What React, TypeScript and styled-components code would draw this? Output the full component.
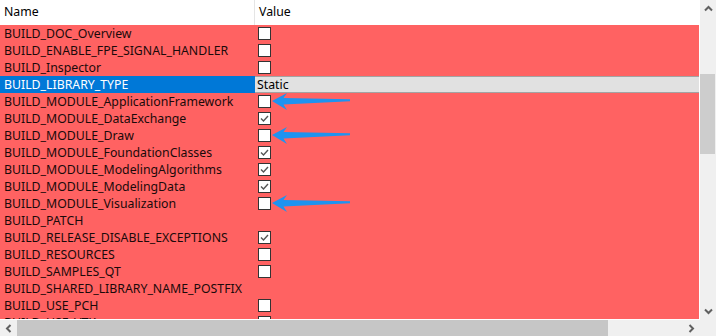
import React from "react";
import styled, { createGlobalStyle } from "styled-components";

const Global = createGlobalStyle`
  html, body { margin: 0; padding: 0; background: #ffffff; }
  body { font-family: "Noto Sans", "Segoe UI", sans-serif; font-size: 12.3px; }
  #root { width: 716px; height: 336px; overflow: hidden; }
`;

const Window = styled.div`
  width: 716px;
  height: 336px;
  display: grid;
  grid-template-columns: 700px 16px;
  grid-template-rows: 320px 16px;
  background: #f0f0f0;
`;

const ListView = styled.div`
  background: #ffffff;
  overflow: hidden;
  display: flex;
  flex-direction: column;
  padding-bottom: 1px;
  box-sizing: border-box;
`;

const Header = styled.div`
  display: flex;
  height: 25px;
  flex: none;
  color: #000;
`;

const HeadCell = styled.div<{ $w?: number }>`
  box-sizing: border-box;
  width: ${(p) => (p.$w ? `${p.$w}px` : "auto")};
  flex: ${(p) => (p.$w ? "none" : "1")};
  padding-left: 4px;
  line-height: 24px;
  border-right: ${(p) => (p.$w ? "1px solid #e5e5e5" : "none")};
`;

const Body = styled.div`
  flex: 1;
  overflow: hidden;
`;

const Row = styled.div`
  display: flex;
  width: 699px;
  height: 17px;
  background: #ff6262;
  color: #1a0a0a;
`;

const NameCell = styled.div<{ $sel?: boolean }>`
  box-sizing: border-box;
  width: 255px;
  flex: none;
  padding-left: 4px;
  line-height: 17px;
  white-space: nowrap;
  overflow: hidden;
  background: ${(p) => (p.$sel ? "#0078d7" : "transparent")};
  color: ${(p) => (p.$sel ? "#ffffff" : "inherit")};
`;

const ValueCell = styled.div<{ $edit?: boolean }>`
  box-sizing: border-box;
  flex: 1;
  position: relative;
  display: flex;
  align-items: center;
  padding-left: ${(p) => (p.$edit ? "2px" : "3px")};
  line-height: 15px;
  color: #000;
  background: ${(p) => (p.$edit ? "#e1e1e1" : "transparent")};
  border-top: ${(p) => (p.$edit ? "1px solid #a3a3a3" : "none")};
  border-bottom: ${(p) => (p.$edit ? "1px solid #a3a3a3" : "none")};
`;

const Box = styled.div`
  box-sizing: border-box;
  width: 13px;
  height: 13px;
  border: 1px solid #333333;
  background: #ffffff;
  display: flex;
  align-items: center;
  justify-content: center;
`;

const Pointer = styled.svg`
  position: absolute;
  left: 17px;
  top: -1px;
  overflow: visible;
`;

const VScroll = styled.div`
  display: flex;
  flex-direction: column;
  background: #f0f0f0;
  border-left: 1px solid #ffffff;
  margin-left: -1px;
`;

const HScroll = styled.div`
  display: flex;
  background: #f0f0f0;
`;

const Btn = styled.div<{ $long?: number }>`
  flex: none;
  width: ${(p) => (p.$long ? "17px" : "16px")};
  height: ${(p) => (p.$long ? "16px" : "17px")};
  display: flex;
  align-items: center;
  justify-content: center;
`;

const Track = styled.div<{ $dir: "v" | "h" }>`
  flex: 1;
  display: flex;
  flex-direction: ${(p) => (p.$dir === "v" ? "column" : "row")};
`;

const VThumb = styled.div<{ $start: number; $len: number }>`
  margin-top: ${(p) => p.$start}px;
  height: ${(p) => p.$len}px;
  width: 15px;
  background: #cdcdcd;
`;

const HThumb = styled.div<{ $len: number }>`
  width: ${(p) => p.$len}px;
  height: 16px;
  background: #c6c6c6;
`;

const Corner = styled.div`
  background: #f0f0f0;
`;

type Val = "none" | "off" | "on" | "static";
const rows: { name: string; v: Val; arrow?: boolean }[] = [
  { name: "BUILD_DOC_Overview", v: "off" },
  { name: "BUILD_ENABLE_FPE_SIGNAL_HANDLER", v: "off" },
  { name: "BUILD_Inspector", v: "off" },
  { name: "BUILD_LIBRARY_TYPE", v: "static" },
  { name: "BUILD_MODULE_ApplicationFramework", v: "off", arrow: true },
  { name: "BUILD_MODULE_DataExchange", v: "on" },
  { name: "BUILD_MODULE_Draw", v: "off", arrow: true },
  { name: "BUILD_MODULE_FoundationClasses", v: "on" },
  { name: "BUILD_MODULE_ModelingAlgorithms", v: "on" },
  { name: "BUILD_MODULE_ModelingData", v: "on" },
  { name: "BUILD_MODULE_Visualization", v: "off", arrow: true },
  { name: "BUILD_PATCH", v: "none" },
  { name: "BUILD_RELEASE_DISABLE_EXCEPTIONS", v: "on" },
  { name: "BUILD_RESOURCES", v: "off" },
  { name: "BUILD_SAMPLES_QT", v: "off" },
  { name: "BUILD_SHARED_LIBRARY_NAME_POSTFIX", v: "none" },
  { name: "BUILD_USE_PCH", v: "off" },
  { name: "BUILD_USE_VTK", v: "off" },
];

const Arrow = () => (
  <Pointer width="80" height="18" viewBox="0 0 80 18">
    <polygon
      points="0,9 15,1 11.5,6 78,7.3 78,9.3 11.5,12.5 15,18"
      fill="#1e93f0"
    />
  </Pointer>
);

const Check = () => (
  <svg width="11" height="11" viewBox="0 0 11 11">
    <polyline points="2,5.5 4.5,8 9,3" fill="none" stroke="#555" strokeWidth="1.4" />
  </svg>
);

const Chevron = ({ dir }: { dir: "up" | "down" | "left" | "right" }) => {
  const rot = { up: 0, right: 90, down: 180, left: 270 }[dir];
  return (
    <svg width="9" height="9" viewBox="0 0 9 9">
      <polyline
        points="1,6.5 4.5,3 8,6.5"
        fill="none"
        stroke="#606060"
        strokeWidth="2"
        transform={`rotate(${rot} 4.5 4.5)`}
      />
    </svg>
  );
};

export default function App() {
  return (
    <>
      <Global />
      <Window>
        <ListView>
          <Header>
            <HeadCell $w={255}>Name</HeadCell>
            <HeadCell>Value</HeadCell>
          </Header>
          <Body>
            {rows.map((r) => (
              <Row key={r.name}>
                <NameCell $sel={r.v === "static"}>{r.name}</NameCell>
                <ValueCell $edit={r.v === "static"}>
                  {r.v === "static" && "Static"}
                  {(r.v === "off" || r.v === "on") && (
                    <Box>{r.v === "on" && <Check />}</Box>
                  )}
                  {r.arrow && <Arrow />}
                </ValueCell>
              </Row>
            ))}
          </Body>
        </ListView>
        <VScroll>
          <Btn>
            <Chevron dir="up" />
          </Btn>
          <Track $dir="v">
            <VThumb $start={57} $len={80} />
          </Track>
          <Btn>
            <Chevron dir="down" />
          </Btn>
        </VScroll>
        <HScroll>
          <Btn $long={1}>
            <Chevron dir="left" />
          </Btn>
          <Track $dir="h">
            <HThumb $len={591} />
          </Track>
          <Btn $long={1}>
            <Chevron dir="right" />
          </Btn>
        </HScroll>
        <Corner />
      </Window>
    </>
  );
}
